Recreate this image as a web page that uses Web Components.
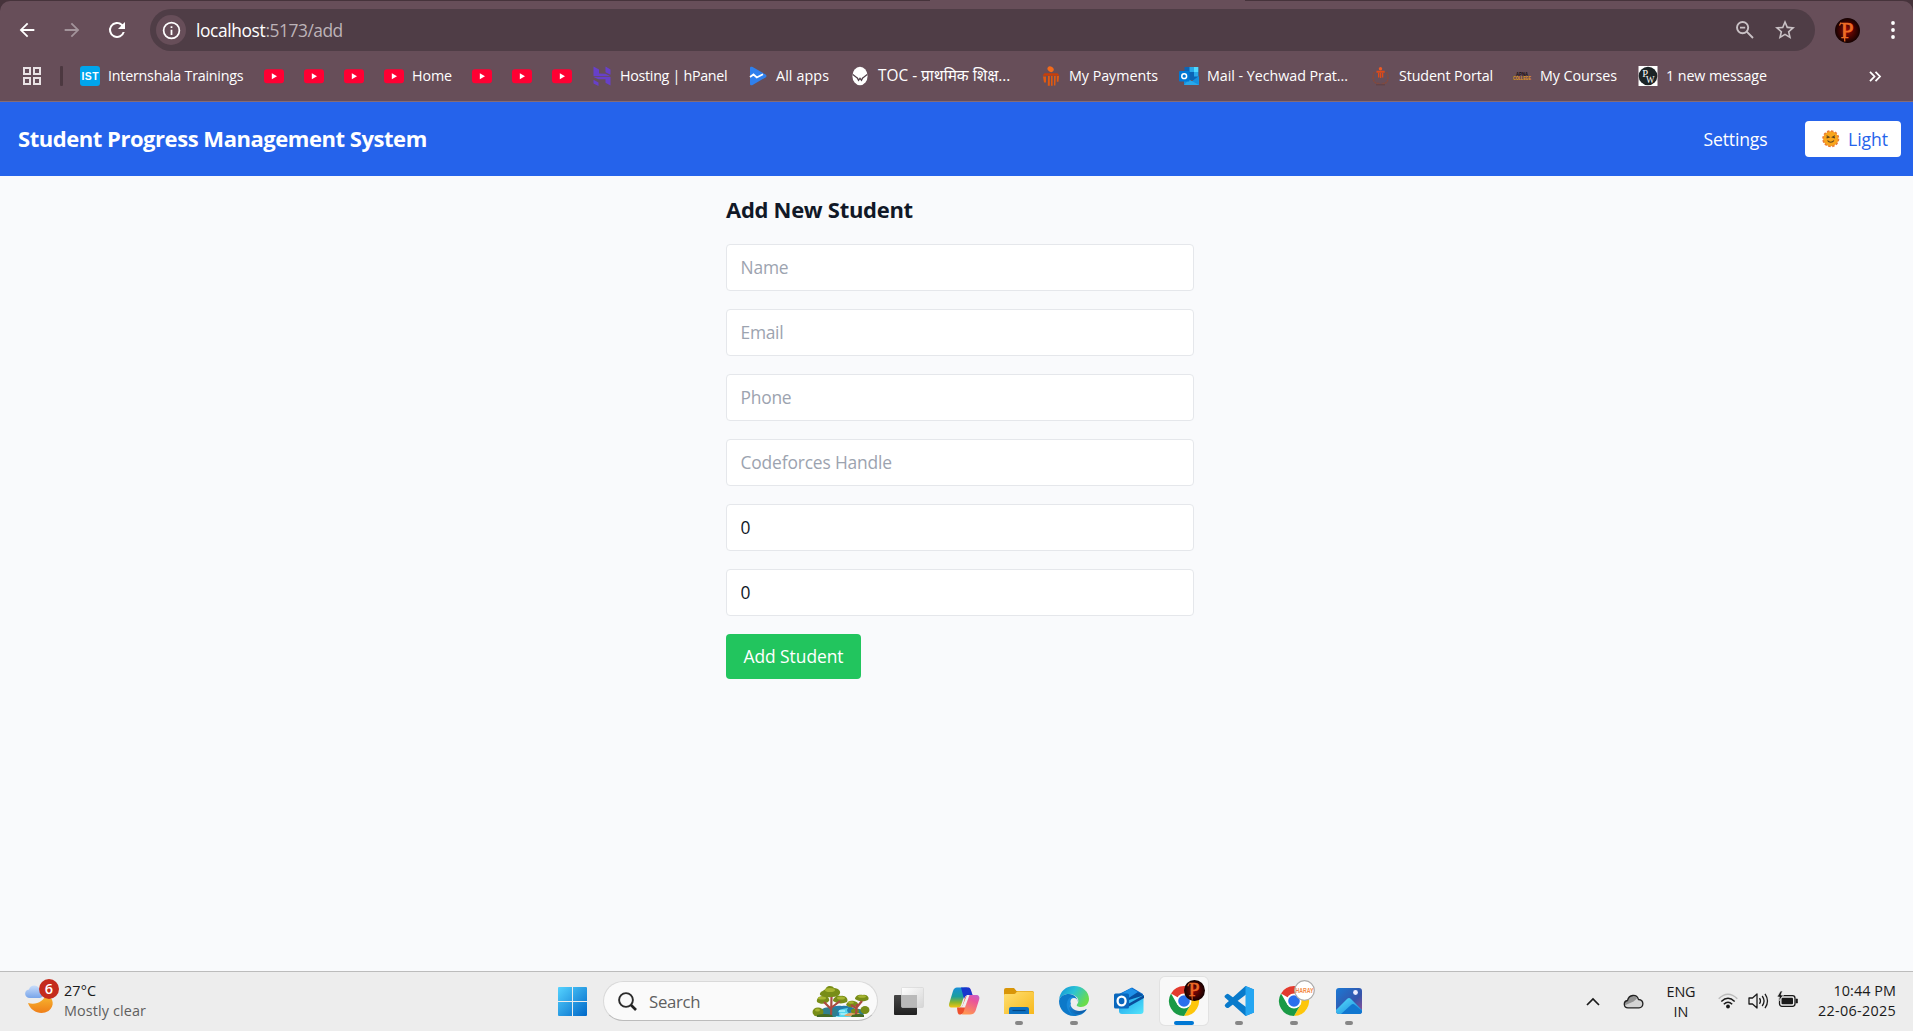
<!DOCTYPE html>
<html lang="en">
<head>
<meta charset="utf-8">
<title>Student Progress Management System</title>
<style>
html,body{margin:0;height:100%;overflow:hidden}
body{font-family:"Open Sans","Noto Sans",sans-serif}
</style>
</head>
<body>
<desktop-screen></desktop-screen>
<script>
const FONT = '"Open Sans","Noto Sans",sans-serif';
const pen = document.createElement('canvas').getContext('2d');
// Letter spacing that makes a text run occupy the wanted width.
function tracking(text, size, weight, width) {
  pen.font = `${weight} ${size}px ${FONT}`;
  return (width - pen.measureText(text).width) / Math.max(1, text.length - 0.5);
}
function define(name, html, setup) {
  customElements.define(name, class extends HTMLElement {
    connectedCallback() {
      if (this.shadowRoot) return;
      const root = this.attachShadow({ mode: 'open' });
      root.innerHTML = html;
      if (setup) setup(this, root);
    }
  });
}

define('fit-text', `<style>:host{display:block;white-space:nowrap;flex:none}</style><slot></slot>`, (el) => {
  const size = +el.getAttribute('size'), weight = el.getAttribute('weight') || 400;
  el.style.fontSize = size + 'px';
  el.style.fontWeight = weight;
  if (el.hasAttribute('w')) {
    const w = +el.getAttribute('w');
    el.style.width = w + 'px';
    if (!el.hasAttribute('plain')) el.style.letterSpacing = tracking(el.textContent, size, weight, w) + 'px';
  }
});

const chromeLogo = `
 <circle cx="15" cy="15" r="15" fill="#fff"/>
 <path d="M15 15 2 7.5A15 15 0 0 1 28 7.5Z" fill="#e33b2e"/>
 <path d="M28 7.5A15 15 0 0 1 15 30L21.5 18.8 15 7.5Z" fill="#fdc60c"/>
 <path d="M2 7.5A15 15 0 0 0 15 30L21.5 18.8 15 22 8.5 18.8Z" fill="#1a9a45"/>
 <circle cx="15" cy="15" r="7.5" fill="#fff"/><circle cx="15" cy="15" r="5.8" fill="#2a6fec"/>`;
const ICONS = {
 back: ['0 0 24 24', `<path d="M20 11H7.8l5.6-5.6L12 4l-8 8 8 8 1.4-1.4L7.8 13H20z" fill="currentColor"/>`],
 forward: ['0 0 24 24', `<path d="M4 11h12.2l-5.6-5.6L12 4l8 8-8 8-1.4-1.4 5.6-5.6H4z" fill="currentColor"/>`],
 reload: ['0 0 24 24', `<path d="M17.65 6.35A8 8 0 1 0 19.73 14h-2.08A6 6 0 1 1 12 6c1.66 0 3.14.69 4.22 1.78L13 11h7V4z" fill="currentColor"/>`],
 info: ['0 0 24 24', `<path d="M11 7h2v2h-2zm0 4h2v6h-2zm1-9a10 10 0 1 0 0 20 10 10 0 0 0 0-20zm0 18a8 8 0 1 1 0-16 8 8 0 0 1 0 16z" fill="currentColor"/>`],
 zoomout: ['0 0 18 18', `<g fill="none" stroke="currentColor" stroke-width="1.9"><circle cx="6.6" cy="6.6" r="5.6"/><path d="M10.7 10.7 17 17M4 6.6h5.2"/></g>`],
 star: ['2 2 20 20', `<path d="m22 9.24-7.19-.62L12 2 9.19 8.63 2 9.24l5.46 4.73L5.82 21 12 17.27 18.18 21l-1.63-7.03zM12 15.4l-3.76 2.27 1-4.28-3.32-2.88 4.38-.38L12 6.1l1.71 4.04 4.38.38-3.32 2.88 1 4.28z" fill="currentColor"/>`],
 dots: ['0 0 4 18', `<g fill="currentColor"><circle cx="2" cy="2" r="1.9"/><circle cx="2" cy="9" r="1.9"/><circle cx="2" cy="16" r="1.9"/></g>`],
 avatar: ['0 0 25 25', `<defs><radialGradient id="r"><stop offset="0" stop-color="#8e0a05"/><stop offset=".55" stop-color="#4a0402"/><stop offset="1" stop-color="#130101"/></radialGradient></defs><circle cx="12.5" cy="12.5" r="12.5" fill="url(#r)"/><text x="12.2" y="19.6" font-family="Liberation Serif" font-weight="400" font-size="23" text-anchor="middle" fill="#ee6b25" stroke="#ee6b25" stroke-width=".7">P</text><path d="M9.500 18l.3 5.500M6 4.500 4.500 7.500" stroke="#ee6b25" stroke-width="1.200"/>`],
 apps: ['0 0 18 18', `<g fill="none" stroke="#e9e2e5" stroke-width="2"><path d="M1 1h6v6H1zM11 1h6v6h-6zM1 11h6v6H1zM11 11h6v6h-6z"/></g>`],
 ist: ['0 0 20 20', `<rect width="20" height="20" rx="3" fill="#00a5ec"/><text x="10" y="14.1" font-family="Liberation Sans" font-weight="700" font-size="10.4" text-anchor="middle" textLength="17" fill="#fff">IST</text>`],
 youtube: ['0 0 20 20', `<rect y="3.2" width="20" height="14" rx="3" fill="#ff0033"/><path d="M7.8 7.2v6l5.2-3z" fill="#fff"/>`],
 hosting: ['0 0 20 20', `<g fill="#673fd0"><path d="M1.500 .500 7 3.500v4l6.500 .2 5 2.500h-17zM13.500 .500l5 3v5.300l-5-2.500zM1.500 11h17v8.500l-5-2.800v-3.400H6.500zM1.500 13.800l5 2.700v3.500l-5-2.500z" opacity=".95"/></g>`],
 allapps: ['0 0 20 20', `<path d="M2 2.2C2 .6 3.4.5 4.6 1.1l13 7.4c1.2.7 1.2 2.2 0 2.9l-13 7.5c-1.2.6-2.6.3-2.6-1.2z" fill="#2f80ed"/><path d="m2 11 3.500-2.500 3.300 3 6.200-3.200" fill="none" stroke="#fff" stroke-width="1.8"/>`],
 toc: ['0 0 20 20', `<ellipse cx="10" cy="10" rx="7.6" ry="9.2" fill="#fff"/><path d="m2.800 8.500 5.400 4.200M17.200 8.500l-5.400 4.200M7 11.500l1.500 2.800 1.500-2 1.500 2L13 11.500" fill="none" stroke="#51404a" stroke-width="1.2"/>`],
 payments: ['0 0 20 20', `<ellipse cx="9.6" cy="3.2" rx="3.3" ry="2.6" transform="rotate(35 9.6 3.2)" fill="#f26a1b"/><path d="M3.4 7.3h13l2.300 2.500H1.500z" fill="#c93f08"/><path d="M2 10.500h3v6H3zM7 10h1.8v9.700H6.8zM10 10h1.6v9.700H10zM13 10h1.8l-.4 9.500H13zM15.8 10H18l-.5 5.800h-1.700z" fill="#e25a10"/>`],
 outlookweb: ['0 0 20 20', `<rect x="5.5" y="1" width="13.8" height="13" fill="#0c64b5"/><path d="M10.5 1h4.5v5h-4.500zM15 6h4.300v4.500h-4.300z" fill="#28a8ea"/><path d="M15 1h4.300v5h-4.300z" fill="#50d9ff"/><path d="M5 19V12l7.500 3.500L20 10v9z" fill="#1490df"/><path d="m20 19-10-5.500-5 5.500z" fill="#28a8ea"/><rect y="5" width="10.500" height="10.500" rx="1" fill="#0078d4"/><circle cx="5.200" cy="10.200" r="2.400" fill="none" stroke="#fff" stroke-width="1.500"/>`],
 portal: ['0 0 20 20', `<path d="M3.500 6C-.5 15 5 18.500 9 17.500M15.500 6c4 9-1 12.500-5 11.500" fill="none" stroke="#84493c" stroke-width="1.600" stroke-dasharray="2 .6"/><circle cx="9.500" cy="2.800" r="1.700" fill="#ee5a24"/><path d="M5.500 4.800h8.200v2H5.500zM7 7h1.400v4.500H7zM9 7h1.200v5H9zM10.900 7h1.400v4.500h-1.400z" fill="#e04a18"/><path d="M5 18.800h9" stroke="#5f4144"/>`],
 apna: ['0 0 20 20', `<text x="10" y="9.700" font-family="Liberation Sans" font-weight="700" font-size="5.500" text-anchor="middle" textLength="12" lengthAdjust="spacingAndGlyphs" fill="#171113">APNA</text><text x="10" y="13.900" font-family="Liberation Sans" font-weight="700" font-size="5" text-anchor="middle" textLength="18" lengthAdjust="spacingAndGlyphs" fill="#e39a19">COLLEGE</text>`],
 pw: ['0 0 20 20', `<rect x=".5" width="19" height="20" fill="#fff"/><circle cx="10" cy="10" r="9.300" fill="#1b2325"/><text x="7.200" y="10.500" font-family="Liberation Serif" font-size="10.500" text-anchor="middle" fill="#fff">P</text><text x="12.300" y="16.500" font-family="Liberation Serif" font-size="10" text-anchor="middle" textLength="8.500" lengthAdjust="spacingAndGlyphs" fill="#fff">W</text>`],
 more: ['0 0 12 11', `<path d="m1 .8 4.500 4.700L1 10.200M6.500 .8 11 5.500 6.500 10.200" fill="none" stroke="#fff" stroke-width="1.800"/>`],
 sun: ['0 0 18 18', `<circle cx="9" cy="9" r="7.800" fill="#f5a023" stroke="#ea7b35" stroke-width="2" stroke-dasharray="2.500 1.584"/><circle cx="9" cy="9" r="7.300" fill="#f8a51c"/><path d="m4.700 6 2.500 1.300-2.500.8M13.300 6l-2.500 1.300 2.500.8M5.700 10.800c1.500 2.300 5 2.300 6.600 0" fill="none" stroke="#5b4420" stroke-width="1.100"/>`],
 weather: ['0 0 36 36', `<defs><linearGradient id="m" x2="0" y2="1"><stop stop-color="#f8bd32"/><stop offset="1" stop-color="#ef7e18"/></linearGradient><linearGradient id="c" x2="0" y2="1"><stop stop-color="#c8ddfa"/><stop offset="1" stop-color="#78a5ea"/></linearGradient></defs><path d="M3 24c8 2.500 16-1.500 18-9 8 4 9 12 2.500 17C16 36.500 6 33 3 24z" fill="url(#m)"/><path d="M5 19c-6 0-6.500-8-1-8.500C5 5.500 12 5.500 14 9c5 0 6.500 9 1 10z" fill="url(#c)"/><circle cx="24" cy="10" r="10" fill="#c42b1c"/><text x="24" y="15.300" font-family="Open Sans" font-weight="600" font-size="14.500" text-anchor="middle" fill="#fff">6</text>`],
 windows: ['0 0 29 29', `<defs><linearGradient id="w" x2="1" y2="1"><stop stop-color="#55d3ff"/><stop offset="1" stop-color="#0067c8"/></linearGradient></defs><path d="M0 1q0-1 1-1h13v14H0zM15 0h13q1 0 1 1v13H15zM0 15h14v14H1q-1 0-1-1zM15 15h14v13q0 1-1 1H15z" fill="url(#w)"/>`],
 search: ['0 0 19 19', `<circle cx="8" cy="8" r="6.900" fill="none" stroke="#2b2b2b" stroke-width="1.900"/><path d="m13 13 5 5" stroke="#222" stroke-width="2.600"/>`],
 trees: ['0 0 56 31', `<path d="M8 30c4-9 14-11 21-10 8-1 16 3 20 10z" fill="#247eaa"/><path d="M7 24q10-6 18 0l-2 7H8zM38 25q8-5 14 1l-3 5H38z" fill="#2f7f8d"/><path d="M21 31q11-2 4-5 0-3 10-4-4 4 7 9z" fill="#55d7ee"/><path d="M26 25h6M26 28h8" stroke="#e1ffff"/><path d="M31 30q4-5 15-3l4 4z" fill="#e3a163"/><g fill="#788d18"><path d="M7 9C6 5 12 5 13 2c2-3 7-2 8 0 5 0 8 4 5 7-4 3-15 3-19 0zM4 16c-1-4 3-6 6-6 5 0 7 3 6 5-3 3-8 4-12 1zM20 15c0-4 5-6 8-5 4-1 8 3 6 6-4 2-10 2-14-1z"/><ellipse cx="5" cy="26" rx="5.500" ry="4.500"/><path d="M42 13c0-4 5-5 8-4 4-1 7 3 5 5-4 2-9 2-13-1zM33 19c1-4 5-5 8-4 4 1 5 3 3 5-4 2-8 2-11-1z"/><ellipse cx="52" cy="24" rx="4.500" ry="4"/><ellipse cx="42" cy="25" rx="4" ry="2.500"/></g><g fill="none" stroke="#a94b40" stroke-width="2.200"><path d="m18 31 .5-20M18 23l-7-7M18 22l9-7M43 29l1-11M43 22l-5-3M44 21l5-6"/></g><g fill="#a7b531"><ellipse cx="17" cy="4" rx="5" ry="2"/><ellipse cx="9" cy="12" rx="4" ry="1.500"/><ellipse cx="28" cy="12" rx="4" ry="1.500"/><ellipse cx="49" cy="10.500" rx="4" ry="1.300"/><ellipse cx="38" cy="16.500" rx="3" ry="1.200"/><ellipse cx="4.500" cy="24" rx="2.500" ry="1.500"/></g><path d="M4 29q8-2 15 0l1 2H4zM39 29q8-2 12 0v2H38z" fill="#446c25"/>`],
 taskview: ['0 0 30 30', `<defs><linearGradient id="a" x2="0" y2="1"><stop stop-color="#474747"/><stop offset="1" stop-color="#202020"/></linearGradient><linearGradient id="b" x2="1" y2="1"><stop stop-color="#fff"/><stop offset="1" stop-color="#d5d5d5"/></linearGradient></defs><rect y="9" width="23" height="20" rx="1" fill="url(#a)"/><rect x="7.500" y="1.500" width="22" height="20" rx="1" fill="url(#b)" stroke="#ccc" stroke-width=".5"/><path d="M8 9h15v12H8z" fill="#b9b9b9"/>`],
 copilot: ['0 0 30 30', `<defs><linearGradient id="p" x1=".2" y1="0" x2=".2" y2="1"><stop stop-color="#178ed8"/><stop offset=".45" stop-color="#1b9e9e"/><stop offset=".75" stop-color="#8fb62c"/><stop offset="1" stop-color="#f4c516"/></linearGradient><linearGradient id="q" x1=".7" y1="0" x2=".4" y2="1"><stop stop-color="#a76af0"/><stop offset=".45" stop-color="#e9549c"/><stop offset="1" stop-color="#ff9353"/></linearGradient></defs><path d="M15 1.500h4c2 0 2.500 1.500 3 3L23.500 9H27c3 0 4 2 3 5l-3.500 11c-1 2.500-3 3.500-5.500 3.500h-8l5.500-17z" fill="url(#q)"/><path d="M8 1.500h10l-6 18c-.5 1.500-1.500 2-3 2H3c-3 0-3.500-2-2.500-5L4 5c.7-2.300 2-3.500 4-3.500z" fill="url(#p)"/><path d="M12 1.500h7c2 0 2.500 1.500 3 3L23.500 9H20c-3 0-4 1.500-5 4z" fill="#1836cc"/><path d="M8 21.500h3q2 0 3-3l1.500-5c1-3 2-4.500 4.500-4.500l-5.500 17c-1 2-2 2.500-4 2.500-1.500 0-2-2-2.500-7z" fill="#ee4f2c"/><path d="M18 9h2.500l-4.500 12.500h-4.500q1.700-.5 2.500-3z" fill="#eee"/>`],
 folder: ['0 0 30 30', `<defs><linearGradient id="f" x2="1" y2="1"><stop stop-color="#ffdf70"/><stop offset="1" stop-color="#f7b81d"/></linearGradient></defs><path d="M0 4q0-2 2-2h8l2.500 3H28q2 0 2 2v5H0z" fill="#d89508"/><path d="M0 9q0-1 1-1h9q1.300 0 2-1.200.7-1.300 2-1.300h14q2 0 2 2V28H0z" fill="url(#f)"/><path d="M5 28v-5q0-2 2-2h16q2 0 2 2v5z" fill="#0c70c1"/><path d="M8.500 24.500h13" stroke="#034582" stroke-width="1.200"/>`],
 edge: ['0 0 30 30', `<defs><linearGradient id="e" x2="1" y2=".5"><stop stop-color="#0f8ed9"/><stop offset=".5" stop-color="#2bc3d5"/><stop offset="1" stop-color="#69dc4c"/></linearGradient><linearGradient id="g" x2="1" y2="1"><stop stop-color="#2090df"/><stop offset="1" stop-color="#09519d"/></linearGradient></defs><path d="M0 14C1 5 7 0 15 0c9 0 15 6 15 13 0 5-4 8-8 8-3 0-5-1-4-2.500C22 14 17 8 10 8 5 8 1 11 0 14z" fill="url(#e)"/><path d="M0 15C1 10 5 8 10 8c5 0 9 4 8.500 8-.5-3.500-8-2.500-8 3.500 0 6 9 8.500 17.500 3.500C25 28 20 30 15 30 6 30 0 23 0 15z" fill="#0d79c9"/><path d="M11.500 11C6 15 6 25 15 30 9 26 8 16 18 14c-1-2-4-4-6.500-3z" fill="#1889da"/><path d="M11.500 16c-3 6 2 14 10 11.500 3-1 5-2.500 6-4.500-8 4.500-17 1-16-7z" fill="url(#g)"/><circle cx="15" cy="15.500" r="3.500" fill="#eee"/>`],
 outlook: ['0 0 30 30', `<defs><linearGradient id="o" x2="1" y2="1"><stop stop-color="#159bea"/><stop offset="1" stop-color="#55e5fb"/></linearGradient></defs><path d="M5 8 18 1.500 29 8v16H5z" fill="#0a69ca"/><path d="M5 9 17 2l12 7-15 10-9-4z" fill="#1f91e8"/><path d="m10 15 14-9 5 3-15 11z" fill="#0750a0"/><path d="M5 17 29.500 9.500V25q0 3-3 3H8q-3 0-3-3z" fill="url(#o)"/><path d="m14 21 16-9V9L14 18z" fill="#0a4e9b"/><rect y="7.500" width="15" height="15" rx="1.500" fill="#0967bd"/><ellipse cx="7.600" cy="15" rx="4" ry="4.400" fill="none" stroke="#fff" stroke-width="2.300"/>`],
 chrome: ['0 0 30 30', chromeLogo],
 vscode: ['0 0 30 30', `<path d="M21.500 0 30 3.500v23L21.500 30 1.500 12q-2-1.700 0-3l1-.8q1-.7 2.200.1L22 21V8.500L4.700 21.700q-1.200.8-2.200 0l-1-.8q-1.700-1.500 0-3z" fill="#087acb"/><path d="M21.500 0 30 3.500v23L21.500 30z" fill="#25a6f2"/>`],
 harary: ['0 0 21 21', `<circle cx="10.500" cy="10.500" r="9.800" fill="#fff" stroke="#aaa" stroke-width="1.200"/><text x="10.500" y="12.800" font-family="Liberation Sans" font-weight="700" font-size="6.300" text-anchor="middle" textLength="18" lengthAdjust="spacingAndGlyphs" fill="#f48a45">HARAY</text>`],
 photos: ['0 0 30 30', `<defs><linearGradient id="h" x2="1" y2="1"><stop stop-color="#1b79d5"/><stop offset=".6" stop-color="#3554aa"/><stop offset="1" stop-color="#9c5196"/></linearGradient><linearGradient id="i" x2="1" y2="1"><stop stop-color="#59e0fb"/><stop offset="1" stop-color="#1584dd"/></linearGradient></defs><rect x="2" y="2" width="26" height="26" rx="3" fill="url(#h)"/><path d="m2 24 11-11q2-2 4 0l11 11v1q0 3-3 3H5q-3 0-3-3z" fill="url(#i)"/><path d="m7 28 10-9q2-2 4 0l7 6q0 3-3 3z" fill="#1177d0"/><circle cx="21.500" cy="6.500" r="2.400" fill="#eef"/>`],
 caret: ['0 0 14 9', `<path d="m1 8 6-6 6 6" fill="none" stroke="#1a1a1a" stroke-width="1.700"/>`],
 cloud: ['0 0 21 15', `<path d="M5 13.800C.5 13.800-.2 7.500 4.500 6.500 6 .5 13.500-.5 15.500 5.500c6 .5 5.500 8.300.5 8.300z" fill="#d4d4d4"/><path d="m4.500 6.500 6 1L14 4.500C11-.5 6 1 4.500 6.500zM1.500 11.500l9-4-6-1q-4 1-3 5z" fill="#929292"/><path d="M5 13.800C.5 13.800-.2 7.500 4.500 6.500 6 .5 13.500-.5 15.500 5.500c6 .5 5.500 8.300.5 8.300z" fill="none" stroke="#222" stroke-width="1.300"/>`],
 wifi: ['0 0 20 16', `<g fill="none" stroke-width="1.500"><path d="M.7 5.700Q10-3.200 19.300 5.700" stroke="#bbb"/><path d="M3.300 8.500q6.700-6.400 13.400 0M5.800 11.200q4.200-4 8.400 0" stroke="#1a1a1a"/></g><circle cx="10" cy="13.500" r="1.900" fill="#1a1a1a"/>`],
 speaker: ['0 0 21 18', `<g fill="none" stroke="#1a1a1a" stroke-width="1.300" stroke-linejoin="round"><path d="M1 6h3.500L9 2v14l-4.500-4H1zM11.500 6.200q2 2.800 0 5.600M14.200 4q3.700 5 0 10M17 1.800q5 7.200 0 14.400"/></g>`],
 battery: ['0 0 21 17', `<rect x="2.500" y="4.700" width="15.500" height="10.600" rx="2.500" fill="none" stroke="#1a1a1a" stroke-width="1.300"/><rect x="4.500" y="6.700" width="11.500" height="6.600" rx="1" fill="#1a1a1a"/><path d="M19 8h1.500v4H19z" fill="#1a1a1a" stroke="#1a1a1a" stroke-width=".6"/><path d="M3.500 0 0 6h2.500L1.500 10.500 6.500 4H4l1.500-4z" fill="#1a1a1a" stroke="#ededed" stroke-width=".7"/>`]
};
define('ui-icon', `<style>:host{display:block;flex:none}svg{display:block;width:100%;height:100%;overflow:visible}</style>`, (el, root) => {
  const [box, body] = ICONS[el.getAttribute('name')];
  el.style.width = el.getAttribute('w') + 'px';
  el.style.height = (el.getAttribute('h') || el.getAttribute('w')) + 'px';
  root.innerHTML += `<svg viewBox="${box}" preserveAspectRatio="none">${body}</svg>`;
});

// Icon, distance to the next bookmark, label, label width.
const marks = [
 ['ist',184,'Internshala Trainings',135.5],['youtube',40],['youtube',40],['youtube',40],['youtube',88,'Home',40],
 ['youtube',40],['youtube',40],['youtube',40],['hosting',156,'Hosting | hPanel',107.5],['allapps',102,'All apps',53],
 ['toc',191,'TOC - प्राथमिक शिक्ष...',133],['payments',138,'My Payments',89],['outlookweb',192,'Mail - Yechwad Prat...',141],
 ['portal',141,'Student Portal',94],['apna',126,'My Courses',77],['pw',0,'1 new message',101]];

define('bookmark-item', `<style>:host{display:flex;align-items:center;gap:8px;flex:none;color:#fff;line-height:20px}</style><slot name="icon"></slot><slot></slot>`);
define('bookmarks-bar', `<style>
:host{display:flex;align-items:center;height:50px;padding:0 32px 0 23px}
.sep{width:3px;height:20px;border-radius:1px;background:#4c3840;margin:0 17px 0 19px}
.end{margin-left:auto}
</style><ui-icon name="apps" w="18"></ui-icon><div class="sep"></div>${marks.map(([i,w,t,tw]) =>
 `<bookmark-item style="${w ? `width:${w}px` : ''}"><ui-icon slot="icon" name="${i}" w="20"></ui-icon>${t ? `<fit-text size="${i==='toc'?15.4:14.3}" w="${tw}" ${i==='toc'?'plain':''}>${t}</fit-text>` : ''}</bookmark-item>`).join('')}
<ui-icon class="end" name="more" w="12" h="11"></ui-icon>`);

define('browser-toolbar', `<style>
:host{display:flex;align-items:center;height:42px;padding:8px 17px 0 16px;color:#fff}
.nav{display:flex;gap:23px;width:134px}
.dim{color:#a3949b}
.omni{flex:none;box-sizing:border-box;width:1665px;height:42px;border-radius:21px;background:#4f3d46;display:flex;align-items:center;padding:0 20px 0 6px}
.site{width:30px;height:30px;border-radius:50%;background:#674e59;display:grid;place-items:center;margin-right:10px}
.url{display:flex;line-height:24px;padding-bottom:1px}.path{color:#bdb3b8}
.tools{margin-left:auto;display:flex;align-items:center;gap:21px;color:#c9c1c5}
.avatar{margin-left:20px}.menu{margin-left:auto;margin-right:1.5px}
</style>
<div class="nav"><ui-icon name="back" w="22"></ui-icon><ui-icon class="dim" name="forward" w="22"></ui-icon><ui-icon name="reload" w="24" style="margin-top:-1px;margin-left:-1.5px"></ui-icon></div>
<div class="omni"><div class="site"><ui-icon name="info" w="21"></ui-icon></div>
<div class="url"><fit-text size="17.4" w="69.5">localhost</fit-text><fit-text class="path" size="17.4" w="77.5">:5173/add</fit-text></div>
<div class="tools"><ui-icon name="zoomout" w="18"></ui-icon><ui-icon name="star" w="20"></ui-icon></div></div>
<ui-icon class="avatar" name="avatar" w="25"></ui-icon><ui-icon class="menu" name="dots" w="4" h="18"></ui-icon>`);

define('browser-chrome', `<style>
:host{display:block;height:102px;background:#46333b;flex:none}
.frame{box-sizing:border-box;height:101px;border-radius:10px 10px 0 0;background:#674e59}
.top{height:1px;display:flex}.tab{width:315px;margin-left:930px;background:#674e59}
.line{height:1px;background:#876b74;margin-top:-1px}
</style><div class="top"><div class="tab"></div></div><div class="frame"><browser-toolbar></browser-toolbar><bookmarks-bar></bookmarks-bar></div><div class="line"></div>`);

define('app-header', `<style>
:host{display:flex;align-items:center;justify-content:space-between;height:74px;flex:none;background:#2563eb;color:#fff;padding:0 12px 0 18px;line-height:28px}
.brand{padding-bottom:2px}
.right{display:flex;align-items:center;gap:37.5px}
button{border:0;margin:0;width:96px;height:36px;border-radius:4px;background:#fff;color:#2563eb;font:inherit;display:flex;align-items:center;gap:8.5px;padding:0 0 0 17px;line-height:28px}
</style><fit-text class="brand" size="22" weight="700" w="409">Student Progress Management System</fit-text>
<div class="right"><fit-text size="17.6" w="64">Settings</fit-text><button><ui-icon name="sun" w="17.500"></ui-icon><fit-text size="17.6" w="40">Light</fit-text></button></div>`);

define('form-field', `<style>
:host{display:block}
input{display:block;box-sizing:border-box;width:100%;height:47px;border:1px solid #e5e7eb;border-radius:4px;background:#fff;padding:0 13.5px 2px;font:17.4px/27px ${FONT};color:#111827;outline:0}
input::placeholder{color:#9ca3af;opacity:1}
</style><input>`, (el, root) => {
  const input = root.querySelector('input'), text = el.getAttribute('placeholder') || el.getAttribute('value');
  if (el.hasAttribute('placeholder')) input.placeholder = text; else input.value = text;
  input.style.letterSpacing = tracking(text, 17.4, 400, +el.getAttribute('w')) + 'px';
});
// The column is centred in the page width plus the gutter on its left.
define('student-form', `<style>
:host{display:flex;flex-direction:column;gap:18px;width:468px;margin:0 auto;padding:17px 0 0 7px;color:#111827}
.title{line-height:32px;padding-bottom:1px}
button{align-self:flex-start;width:135px;height:45px;border:0;border-radius:4px;background:#22c55e;color:#fff;font:inherit;line-height:27px;display:grid;place-items:center;padding:0}
</style><fit-text class="title" size="22" weight="700" w="187">Add New Student</fit-text>
<form-field placeholder="Name" w="48"></form-field><form-field placeholder="Email" w="43"></form-field>
<form-field placeholder="Phone" w="51"></form-field><form-field placeholder="Codeforces Handle" w="151.5"></form-field>
<form-field value="0" w="10"></form-field><form-field value="0" w="10"></form-field>
<button><fit-text size="17.4" w="100">Add Student</fit-text></button>`);

define('task-button', `<style>
:host{display:flex;flex-direction:column;align-items:center;justify-content:flex-end;box-sizing:border-box;width:48px;height:48px;margin:0 3.500px;border-radius:5px;flex:none;position:relative}
:host([active]){background:#f8f8f8;box-shadow:0 0 0 1px #e2e2e2}
i{display:block;width:8px;height:4px;border-radius:2px;margin-top:5px;background:transparent}
:host([open]) i{background:#868686}:host([active]) i{width:20px;background:#0078d4}
.badge{position:absolute;top:3px;left:24px}
</style><slot></slot><div class="badge"><slot name="badge"></slot></div><i></i>`);
define('search-pill', `<style>
:host{display:flex;align-items:center;box-sizing:border-box;width:275px;height:40px;margin:0 3px 0 16px;border:1px solid #d9d9d9;border-bottom-color:#bcbcbc;border-radius:20px;background:#fafafa;color:#5f5f5f;padding:0 8px 0 14px;line-height:24px}
.t{margin-left:12px;padding-top:1px}.p{margin-left:auto}
</style><ui-icon name="search" w="19"></ui-icon><fit-text class="t" size="16.8" w="51.5">Search</fit-text><ui-icon class="p" name="trees" w="56" h="31"></ui-icon>`);
define('task-bar', `<style>
:host{display:flex;align-items:flex-start;box-sizing:border-box;height:60px;flex:none;border-top:1px solid #bcbcbc;background:#ededed;color:#1a1a1a;line-height:20px}
.weather{display:flex;gap:3px;width:533px;padding:7px 0 0 25px;box-sizing:border-box}
.weather div{padding-top:2px}.grey{color:#5f5f5f}
.apps{display:flex;align-items:center;height:58px;margin-left:25px}
.tray{display:flex;margin-left:auto;padding-right:17px;height:58px;align-items:center}
.col{display:flex;flex-direction:column;align-items:center;padding-top:1px}
.end{align-items:flex-end;padding:0 0 1px}
</style>
<div class="weather"><ui-icon name="weather" w="36"></ui-icon><div><fit-text size="14.4" w="32">27°C</fit-text><fit-text class="grey" size="14.4" w="82">Mostly clear</fit-text></div></div>
<div class="apps"><ui-icon name="windows" w="29"></ui-icon><search-pill></search-pill>
<task-button><ui-icon name="taskview" w="30"></ui-icon></task-button>
<task-button><ui-icon name="copilot" w="30"></ui-icon></task-button>
<task-button open><ui-icon name="folder" w="30"></ui-icon></task-button>
<task-button open><ui-icon name="edge" w="30"></ui-icon></task-button>
<task-button><ui-icon name="outlook" w="30"></ui-icon></task-button>
<task-button active><ui-icon name="chrome" w="30"></ui-icon><ui-icon slot="badge" name="avatar" w="21"></ui-icon></task-button>
<task-button open><ui-icon name="vscode" w="30"></ui-icon></task-button>
<task-button open><ui-icon name="chrome" w="30"></ui-icon><ui-icon slot="badge" name="harary" w="21"></ui-icon></task-button>
<task-button open><ui-icon name="photos" w="30"></ui-icon></task-button></div>
<div class="tray"><ui-icon name="caret" w="14" h="9"></ui-icon>
<ui-icon name="cloud" w="21" h="15" style="margin-left:23px"></ui-icon>
<div class="col" style="margin-left:22.5px"><fit-text size="14.4" w="29">ENG</fit-text><fit-text size="14.4" w="15">IN</fit-text></div>
<ui-icon name="wifi" w="20" h="16" style="margin-left:22px"></ui-icon>
<ui-icon name="speaker" w="21" h="18" style="margin-left:10px"></ui-icon>
<ui-icon name="battery" w="21" h="17" style="margin-left:8.5px;margin-top:-3px"></ui-icon>
<div class="col end" style="margin-left:20px"><fit-text size="14.4" w="62.5">10:44 PM</fit-text><fit-text size="14.4" w="78">22-06-2025</fit-text></div></div>`);

define('desktop-screen', `<style>
:host{display:flex;flex-direction:column;height:1031px;font-family:${FONT}}
main{flex:1;background:#f9fafc;min-height:0}
</style><browser-chrome></browser-chrome><app-header></app-header><main><student-form></student-form></main><task-bar></task-bar>`);
</script>
</body>
</html>
